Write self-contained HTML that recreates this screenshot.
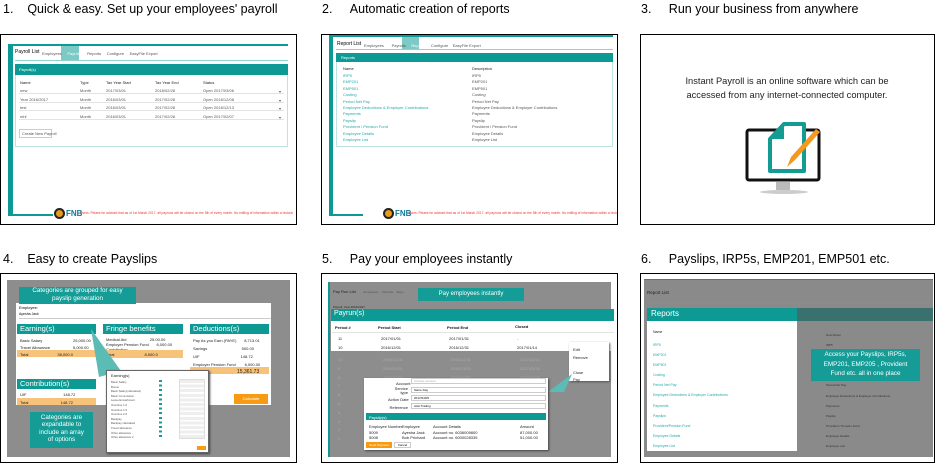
<!DOCTYPE html>
<html><head><meta charset="utf-8">
<style>
*{margin:0;padding:0;box-sizing:border-box}
body{width:937px;height:464px;background:#fff;position:relative;overflow:hidden;font-family:"Liberation Sans",Arial,sans-serif;color:#000}
.a{position:absolute}
.h{position:absolute;font-size:12.5px;white-space:nowrap}
.frame{position:absolute;border:1.5px solid #000;background:#fff;overflow:hidden}
.t{font-size:4px;color:#555;white-space:nowrap;position:absolute}
.teal{background:#0e9a94}
.row{position:absolute;height:1px;background:#e3e3e3}
</style></head><body>

<div class="h" style="left:3px;top:2px">1.&nbsp;&nbsp;&nbsp;&nbsp;Quick &amp; easy. Set up your employees' payroll</div>
<div class="h" style="left:322px;top:2px">2.&nbsp;&nbsp;&nbsp;&nbsp;&nbsp;Automatic creation of reports</div>
<div class="h" style="left:641px;top:2px">3.&nbsp;&nbsp;&nbsp;&nbsp;&nbsp;Run your business from anywhere</div>
<div class="h" style="left:3px;top:252px">4.&nbsp;&nbsp;&nbsp;&nbsp;Easy to create Payslips</div>
<div class="h" style="left:322px;top:252px">5.&nbsp;&nbsp;&nbsp;&nbsp;&nbsp;Pay your employees instantly</div>
<div class="h" style="left:641px;top:252px">6.&nbsp;&nbsp;&nbsp;&nbsp;&nbsp;Payslips, IRP5s, EMP201, EMP501 etc.</div>

<!-- Panel 1 -->
<div class="frame" style="left:0;top:34px;width:297px;height:191px">
  <div class="a teal" style="left:7px;top:9px;width:5px;height:172px"></div>
  <div class="a teal" style="left:7px;top:9px;width:280px;height:2px"></div>
  <div class="a teal" style="left:12px;top:179px;width:40px;height:2px"></div>
  <div class="a" style="left:14px;top:14px;font-size:5px">Payroll List</div>
  <div class="a" style="left:60px;top:11px;width:18px;height:14px;background:#7cc9c5"></div>
  <div class="t" style="left:41px;top:16px">Employees&nbsp;&nbsp;&nbsp;&nbsp;&nbsp;<span style="color:#fff">Payrolls</span>&nbsp;&nbsp;&nbsp;&nbsp;&nbsp;Reports&nbsp;&nbsp;&nbsp;&nbsp;&nbsp;Configure&nbsp;&nbsp;&nbsp;&nbsp;&nbsp;EasyFile Export</div>
  <div class="a" style="left:14px;top:25px;width:273px;height:1px;background:#8fd3cf"></div>
  <div class="a" style="left:14px;top:29px;width:273px;height:83px;border:1px solid #bfe3e1"></div>
  <div class="a teal" style="left:14px;top:29px;width:273px;height:11px"></div>
  <div class="t" style="left:18px;top:32px;color:#fff">Payroll(s)</div>
  <div class="t" style="left:19px;top:45px;color:#222">Name</div><div class="t" style="left:79px;top:45px;color:#222">Type</div><div class="t" style="left:105px;top:45px;color:#222">Tax Year Start</div><div class="t" style="left:154px;top:45px;color:#222">Tax Year End</div><div class="t" style="left:202px;top:45px;color:#222">Status</div>
  <div class="t" style="left:19px;top:53px">new</div><div class="t" style="left:79px;top:53px">Month</div><div class="t" style="left:105px;top:53px">2017/03/01</div><div class="t" style="left:154px;top:53px">2018/02/28</div><div class="t" style="left:202px;top:53px">Open 2017/03/06</div>
  <div class="t" style="left:19px;top:62px">Year 2016/2017</div><div class="t" style="left:79px;top:62px">Month</div><div class="t" style="left:105px;top:62px">2016/03/01</div><div class="t" style="left:154px;top:62px">2017/02/28</div><div class="t" style="left:202px;top:62px">Open 2016/12/08</div>
  <div class="t" style="left:19px;top:70px">test</div><div class="t" style="left:79px;top:70px">Month</div><div class="t" style="left:105px;top:70px">2016/03/01</div><div class="t" style="left:154px;top:70px">2017/02/28</div><div class="t" style="left:202px;top:70px">Open 2016/12/13</div>
  <div class="t" style="left:19px;top:79px">mhl</div><div class="t" style="left:79px;top:79px">Month</div><div class="t" style="left:105px;top:79px">2016/03/01</div><div class="t" style="left:154px;top:79px">2017/02/28</div><div class="t" style="left:202px;top:79px">Open 2017/02/07</div>
  <div class="row" style="left:18px;top:58px;width:265px"></div><div class="row" style="left:18px;top:67px;width:265px"></div><div class="row" style="left:18px;top:75px;width:265px"></div><div class="row" style="left:18px;top:84px;width:265px"></div>
  <div class="t" style="left:278px;top:53px;line-height:8.7px">▾<br>▾<br>▾<br>▾</div>
  <div class="a" style="left:18px;top:94px;width:33px;height:9px;border:1px solid #ccc"></div>
  <div class="t" style="left:21px;top:96px">Create New Payroll</div>
  <div class="a" style="left:53px;top:173px;width:11px;height:11px;border-radius:50%;background:#e89a1a;border:2px solid #222"></div>
  <div class="a" style="left:65px;top:174px;font-size:8px;color:#0a7c9a;font-weight:bold">FNB</div>
  <div class="t" style="left:79px;top:176px;color:#e33;font-size:3.3px">Users: Please be advised that as of 1st March 2017, all payruns will be closed on the 5th of every month. No editing of information within a historic</div>
</div>

<!-- Panel 2 -->
<div class="frame" style="left:321px;top:34px;width:297px;height:191px">
  <div class="a teal" style="left:7px;top:0;width:4px;height:181px"></div>
  <div class="a teal" style="left:7px;top:0;width:284px;height:2px"></div>
  <div class="a" style="left:15px;top:6px;font-size:5px">Report List</div>
  <div class="a" style="left:80px;top:2px;width:17px;height:13px;background:#7cc9c5"></div>
  <div class="t" style="left:42px;top:8px">Employees&nbsp;&nbsp;&nbsp;&nbsp;&nbsp;&nbsp;&nbsp;Payrolls&nbsp;&nbsp;&nbsp;&nbsp;&nbsp;<span style="color:#fff">Reports</span>&nbsp;&nbsp;&nbsp;&nbsp;&nbsp;Configure&nbsp;&nbsp;&nbsp;&nbsp;EasyFile Export</div>
  <div class="a" style="left:14px;top:14px;width:277px;height:1px;background:#8fd3cf"></div>
  <div class="a" style="left:14px;top:18px;width:277px;height:94px;border:1px solid #bfe3e1"></div>
  <div class="a teal" style="left:14px;top:18px;width:277px;height:9px"></div>
  <div class="t" style="left:19px;top:20px;color:#fff">Reports</div>
  <div class="t" style="left:21px;top:31px;color:#222">Name</div><div class="t" style="left:150px;top:31px;color:#222">Description</div>
  <div class="t" style="left:21px;top:38px;color:#2aa;line-height:6.4px">IRP5<br>EMP201<br>EMP501<br>Costing<br>Period Net Pay<br>Employee Deductions &amp; Employer Contributions<br>Payments<br>Payslip<br>Provident / Pension Fund<br>Employee Details<br>Employee List</div>
  <div class="t" style="left:150px;top:38px;line-height:6.4px">IRP5<br>EMP201<br>EMP501<br>Costing<br>Period Net Pay<br>Employee Deductions &amp; Employer Contributions<br>Payments<br>Payslip<br>Provident / Pension Fund<br>Employee Details<br>Employee List</div>
  <div class="a teal" style="left:11px;top:179px;width:30px;height:2px"></div>
  <div class="a" style="left:61px;top:173px;width:11px;height:11px;border-radius:50%;background:#e89a1a;border:2px solid #222"></div>
  <div class="a" style="left:73px;top:174px;font-size:8px;color:#0a7c9a;font-weight:bold">FNB</div>
  <div class="t" style="left:86px;top:176px;color:#e33;font-size:3.3px">Users: Please be advised that as of 1st March 2017, all payruns will be closed on the 5th of every month. No editing of information within a historic</div>
</div>

<!-- Panel 3 -->
<div class="frame" style="left:640px;top:34px;width:295px;height:191px">
  <div class="a" style="left:0;top:39px;width:292px;text-align:center;font-size:9.3px;line-height:14px;color:#222">Instant Payroll is an online software which can be<br>accessed from any internet-connected computer.</div>
  <svg class="a" style="left:103px;top:84px" width="80" height="80" viewBox="0 0 80 80">
    <rect x="3" y="11" width="72" height="50" rx="2" fill="none" stroke="#111" stroke-width="3"/>
    <path d="M40 5 H60 V52 H26 V20 Z" fill="#fff" stroke="#149c93" stroke-width="4" stroke-linejoin="round"/>
    <path d="M26 20 L40 5 V20 Z" fill="#149c93"/>
    <path d="M43 48 L47 38 L72 10 L76 13 L51 41 Z" fill="#f39a1e"/>
    <rect x="32" y="63" width="14" height="8" fill="#bbb"/>
    <ellipse cx="40" cy="73" rx="24" ry="2" fill="#ccc"/>
  </svg>
</div>

<!-- Panel 4 -->
<div class="frame" style="left:0;top:273px;width:297px;height:190px">
  <div class="a" style="left:6px;top:6px;width:283px;height:177px;background:#8d8d8d"></div>
  <div class="a" style="left:15px;top:29px;width:255px;height:102px;background:#fff"></div>
  <div class="a" style="left:18px;top:13px;width:117px;height:17px;background:#159c96;color:#fff;font-size:6.3px;text-align:center;line-height:7.5px">Categories are grouped for easy<br>payslip generation</div>
  <div class="a" style="left:18px;top:31px;font-size:4px">Employee:</div>
  <div class="a" style="left:18px;top:38px;width:252px;height:7px;border-bottom:1px solid #ccc;font-size:3.5px">Ayesha Jack</div>
  <div class="a teal" style="left:16px;top:50px;width:79px;height:10px"></div>
  <div class="a" style="left:19px;top:50px;color:#fff;font-size:7.5px">Earning(s)</div>
  <div class="a teal" style="left:102px;top:50px;width:80px;height:10px"></div>
  <div class="a" style="left:105px;top:50px;color:#fff;font-size:7.5px">Fringe benefits</div>
  <div class="a teal" style="left:189px;top:50px;width:79px;height:10px"></div>
  <div class="a" style="left:192px;top:50px;color:#fff;font-size:7.5px">Deductions(s)</div>
  <div class="t" style="left:19px;top:63px;color:#222;line-height:7px">Basic Salary<br>Travel Allowance</div>
  <div class="t" style="left:72px;top:63px;color:#222;line-height:7px">25,000.00<br>5,000.00</div>
  <div class="a" style="left:16px;top:76px;width:79px;height:7px;background:#f7c27a"></div>
  <div class="t" style="left:19px;top:78px;color:#222">Total&nbsp;&nbsp;&nbsp;&nbsp;&nbsp;&nbsp;&nbsp;&nbsp;&nbsp;&nbsp;&nbsp;&nbsp;&nbsp;&nbsp;&nbsp;&nbsp;&nbsp;&nbsp;&nbsp;&nbsp;&nbsp;&nbsp;&nbsp;&nbsp;&nbsp;&nbsp;38,000.0</div>
  <div class="t" style="left:105px;top:63px;color:#222;line-height:5px">Medical Aid&nbsp;&nbsp;&nbsp;&nbsp;&nbsp;&nbsp;&nbsp;&nbsp;&nbsp;&nbsp;&nbsp;&nbsp;&nbsp;&nbsp;&nbsp;&nbsp;&nbsp;&nbsp;&nbsp;&nbsp;&nbsp;25.00.00<br>Employer Pension Fund&nbsp;&nbsp;&nbsp;&nbsp;&nbsp;&nbsp;&nbsp;6,000.00<br>Contribution</div>
  <div class="a" style="left:102px;top:76px;width:80px;height:8px;background:#f7c27a"></div>
  <div class="t" style="left:105px;top:78px;color:#222">Total&nbsp;&nbsp;&nbsp;&nbsp;&nbsp;&nbsp;&nbsp;&nbsp;&nbsp;&nbsp;&nbsp;&nbsp;&nbsp;&nbsp;&nbsp;&nbsp;&nbsp;&nbsp;&nbsp;&nbsp;&nbsp;&nbsp;&nbsp;&nbsp;&nbsp;&nbsp;&nbsp;8,500.0</div>
  <div class="t" style="left:192px;top:63px;color:#222;line-height:8px">Pay As you Earn (PAYE)&nbsp;&nbsp;&nbsp;&nbsp;&nbsp;&nbsp;&nbsp;8,713.01<br>Savings&nbsp;&nbsp;&nbsp;&nbsp;&nbsp;&nbsp;&nbsp;&nbsp;&nbsp;&nbsp;&nbsp;&nbsp;&nbsp;&nbsp;&nbsp;&nbsp;&nbsp;&nbsp;&nbsp;&nbsp;&nbsp;&nbsp;&nbsp;&nbsp;&nbsp;&nbsp;&nbsp;&nbsp;&nbsp;&nbsp;&nbsp;500.00<br>UIF&nbsp;&nbsp;&nbsp;&nbsp;&nbsp;&nbsp;&nbsp;&nbsp;&nbsp;&nbsp;&nbsp;&nbsp;&nbsp;&nbsp;&nbsp;&nbsp;&nbsp;&nbsp;&nbsp;&nbsp;&nbsp;&nbsp;&nbsp;&nbsp;&nbsp;&nbsp;&nbsp;&nbsp;&nbsp;&nbsp;&nbsp;&nbsp;&nbsp;&nbsp;&nbsp;&nbsp;&nbsp;148.72<br>Employer Pension Fund&nbsp;&nbsp;&nbsp;&nbsp;&nbsp;&nbsp;&nbsp;&nbsp;6,000.00</div>
  <div class="a" style="left:189px;top:93px;width:79px;height:7px;background:#f7c27a"></div>
  <div class="t" style="left:236px;top:95px;color:#222;font-size:5px">15,361.73</div>
  <svg class="a" style="left:90px;top:55px" width="40" height="50"><polygon points="0,0 30,42 8,48" fill="#5bbcb6"/></svg>
  <div class="a teal" style="left:16px;top:105px;width:79px;height:10px"></div>
  <div class="a" style="left:19px;top:105px;color:#fff;font-size:7.5px">Contribution(s)</div>
  <div class="t" style="left:19px;top:118px;color:#222">UIF&nbsp;&nbsp;&nbsp;&nbsp;&nbsp;&nbsp;&nbsp;&nbsp;&nbsp;&nbsp;&nbsp;&nbsp;&nbsp;&nbsp;&nbsp;&nbsp;&nbsp;&nbsp;&nbsp;&nbsp;&nbsp;&nbsp;&nbsp;&nbsp;&nbsp;&nbsp;&nbsp;&nbsp;&nbsp;&nbsp;&nbsp;&nbsp;&nbsp;148.72</div>
  <div class="a" style="left:16px;top:124px;width:79px;height:7px;background:#f7c27a"></div>
  <div class="t" style="left:19px;top:126px;color:#222">Total&nbsp;&nbsp;&nbsp;&nbsp;&nbsp;&nbsp;&nbsp;&nbsp;&nbsp;&nbsp;&nbsp;&nbsp;&nbsp;&nbsp;&nbsp;&nbsp;&nbsp;&nbsp;&nbsp;&nbsp;&nbsp;&nbsp;&nbsp;&nbsp;&nbsp;&nbsp;&nbsp;&nbsp;&nbsp;148.72</div>
  <div class="a" style="left:233px;top:120px;width:34px;height:10px;background:#f99b12;color:#fff;font-size:4px;text-align:center;line-height:10px">Calculate</div>
  <div class="a" style="left:105px;top:96px;width:103px;height:83px;background:#fff;border:1px solid #666;box-shadow:1px 1px 2px #444"></div>
  <div class="t" style="left:110px;top:99px;color:#222">Earning(s)</div>
  <div class="t" style="left:110px;top:106px;line-height:4.6px;font-size:2.8px">Basic Salary<br>Bonus<br>Basic Salary(calculated)<br>Basic Commission<br>Leave Encashment<br>Overtime 1.0<br>Overtime 1.5<br>Overtime 2.0<br>Backpay<br>Backpay calculated<br>Travel allowance<br>Other allowance<br>Other allowance 2</div>
  <div class="a" style="left:158px;top:106px;width:3px;height:60px;background:repeating-linear-gradient(#159c96 0 2px,transparent 2px 4.6px)"></div>
  <div class="a" style="left:178px;top:105px;width:26px;height:60px;background:repeating-linear-gradient(#eee 0 3px,#fff 3px 4.6px);border:1px solid #ddd"></div>
  <div class="a" style="left:196px;top:172px;width:9px;height:4px;background:#f99b12"></div>
  <div class="a" style="left:29px;top:138px;width:63px;height:36px;background:#159c96;color:#fff;font-size:6.3px;text-align:center;line-height:7.3px;padding-top:2px">Categories are<br>expandable to<br>include an array<br>of options</div>
</div>

<!-- Panel 5 -->
<div class="frame" style="left:321px;top:273px;width:297px;height:190px">
  <div class="a" style="left:6px;top:8px;width:283px;height:175px;background:#8d8d8d"></div>
  <div class="a teal" style="left:6px;top:8px;width:2px;height:175px"></div>
  <div class="t" style="left:11px;top:15px;color:#222;font-size:4px">Pay Run List&nbsp;&nbsp;&nbsp;&nbsp;&nbsp;&nbsp;&nbsp;<span style="color:#555;font-size:3px">Employees&nbsp;&nbsp;&nbsp;&nbsp;&nbsp;Payrolls&nbsp;&nbsp;&nbsp;&nbsp;Repo</span></div>
  <div class="a" style="left:96px;top:14px;width:106px;height:13px;background:#159c96;color:#fff;font-size:6px;text-align:center;line-height:13px">Pay employees instantly</div>
  <div class="t" style="left:11px;top:31px;color:#222;font-size:3px">Payroll: Year 2016/2017</div>
  <div class="a teal" style="left:9px;top:35px;width:283px;height:12px"></div>
  <div class="a" style="left:12px;top:36px;color:#fff;font-size:7px">Payrun(s)</div>
  <div class="a" style="left:9px;top:47px;width:283px;height:30px;background:#fff"></div>
  <div class="t" style="left:13px;top:51px;color:#111;font-weight:bold;font-size:4px">Period #</div>
  <div class="t" style="left:56px;top:51px;color:#111;font-weight:bold;font-size:4px">Period Start</div>
  <div class="t" style="left:125px;top:51px;color:#111;font-weight:bold;font-size:4px">Period End</div>
  <div class="t" style="left:193px;top:50px;color:#111;font-weight:bold;font-size:4px">Closed</div>
  <div class="row" style="left:10px;top:58px;width:282px"></div>
  <div class="t" style="left:16px;top:62px;color:#222">11</div><div class="t" style="left:59px;top:62px;color:#222">2017/01/01</div><div class="t" style="left:127px;top:62px;color:#222">2017/01/31</div><div class="t" style="left:195px;top:62px">-</div>
  <div class="t" style="left:16px;top:71px;color:#222">10</div><div class="t" style="left:59px;top:71px;color:#222">2016/12/01</div><div class="t" style="left:127px;top:71px;color:#222">2016/12/31</div><div class="t" style="left:195px;top:71px;color:#222">2017/01/14</div>
  <div class="t" style="left:16px;top:82px;color:#aaa;line-height:8.8px">10<br>9<br>8<br>7<br>6<br>5<br>4<br>3<br>2<br>1</div>
  <div class="t" style="left:61px;top:82px;color:#aaa;line-height:8.8px">2016/12/01<br>2016/11/01<br>2016/10/01</div>
  <div class="t" style="left:129px;top:82px;color:#aaa;line-height:8.8px">2016/12/31<br>2016/11/30<br>2016/10/31</div>
  <div class="t" style="left:198px;top:82px;color:#aaa;line-height:8.8px">2017/03/14<br>2017/03/31<br>2017/03/08</div>
  <div class="a" style="left:247px;top:68px;width:40px;height:39px;background:#fff;box-shadow:1px 1px 2px #555"></div>
  <div class="t" style="left:251px;top:72px;color:#222;line-height:7.5px">Edit<br>Remove<br><br>Close<br>Pay</div>
  <svg class="a" style="left:222px;top:98px" width="30" height="22"><polygon points="4,20 28,2 20,20" fill="#5bbcb6"/></svg>
  <div class="a" style="left:42px;top:104px;width:184px;height:72px;background:#fff;box-shadow:1px 1px 2px #444"></div>
  <div class="t" style="left:74px;top:106px;color:#222;line-height:8px;text-align:right;width:12px">Account</div>
  <div class="a" style="left:89px;top:104px;width:135px;height:6px;border:1px solid #ccc;font-size:3px;color:#aaa;padding-left:2px">Choose account</div>
  <div class="t" style="left:66px;top:113px;color:#222;text-align:right;width:20px;line-height:4px">Service<br>type</div>
  <div class="a" style="left:89px;top:113px;width:135px;height:6px;border:1px solid #ccc;font-size:3px;padding-left:2px">Same Day</div>
  <div class="t" style="left:66px;top:123px;color:#222;text-align:right;width:20px">Action Date</div>
  <div class="a" style="left:89px;top:121px;width:135px;height:6px;border:1px solid #ccc;font-size:3px;padding-left:2px">2017/04/05</div>
  <div class="t" style="left:66px;top:131px;color:#222;text-align:right;width:20px">Reference</div>
  <div class="a" style="left:89px;top:129px;width:135px;height:6px;border:1px solid #ccc;font-size:3px;padding-left:2px">AAA Trading</div>
  <div class="a teal" style="left:44px;top:139px;width:180px;height:7px"></div>
  <div class="t" style="left:47px;top:141px;color:#fff">Payslip(s)</div>
  <div class="t" style="left:47px;top:150px;color:#222;line-height:5.5px">Employee Number<br>5009<br>5008</div>
  <div class="t" style="left:80px;top:150px;color:#222;line-height:5.5px">Employee<br>Ayesha Jack<br>Bob Prichard</div>
  <div class="t" style="left:111px;top:150px;color:#222;line-height:5.5px">Account Details<br>Account no. 6036009800<br>Account no. 6000028335</div>
  <div class="t" style="left:198px;top:150px;color:#222;line-height:5.5px">Amount<br>87,000.00<br>51,000.00</div>
  <div class="a" style="left:44px;top:168px;width:26px;height:6px;background:#f99b12;font-size:3px;color:#fff;text-align:center;line-height:6px">Send Payment</div>
  <div class="a" style="left:72px;top:168px;width:17px;height:6px;border:1px solid #ccc;font-size:3px;text-align:center;line-height:5px">Cancel</div>
</div>

<!-- Panel 6 -->
<div class="frame" style="left:640px;top:273px;width:295px;height:190px">
  <div class="a" style="left:3px;top:5px;width:289px;height:178px;background:#8a8a8a"></div>
  <div class="a" style="left:3px;top:5px;width:289px;height:1px;background:#3f7e7b"></div>
  <div class="t" style="left:6px;top:16px;color:#222;font-size:4.5px">Report List</div>
  <div class="a" style="left:6px;top:29px;width:286px;height:1px;background:#6b9b99"></div>
  <div class="a" style="left:6px;top:34px;width:286px;height:13px;background:#3a716e"></div>
  <div class="a teal" style="left:6px;top:34px;width:150px;height:13px"></div>
  <div class="a" style="left:10px;top:35px;color:#fff;font-size:8px">Reports</div>
  <div class="a" style="left:6px;top:47px;width:150px;height:130px;background:#fff"></div>
  <div class="t" style="left:12px;top:56px;color:#222;font-size:3.5px">Name</div>
  <div class="t" style="left:12px;top:66px;color:#2aa;font-size:3.5px;line-height:10.1px">IRP5<br>EMP201<br>EMP501<br>Costing<br>Period Net Pay<br>Employee Deductions &amp; Employer Contributions<br>Payments<br>Payslips<br>Provident/Pension Fund<br>Employee Details<br>Employee List</div>
  <div class="t" style="left:185px;top:56px;color:#333;font-size:3px;line-height:10.1px">Description<br>IRP5<br><br><br><br>Period Net Pay<br>Employee Deductions &amp; Employer Contributions<br>Payments<br>Payslip<br>Provident / Pension Fund<br>Employee Details<br>Employee List</div>
  <div class="a" style="left:170px;top:75px;width:109px;height:32px;background:#159c96;color:#fff;font-size:6.3px;text-align:center;line-height:9.5px;padding-top:1px">Access your Payslips, IRP5s,<br>EMP201, EMP205 , Provident<br>Fund etc. all in one place</div>
</div>

</body></html>
